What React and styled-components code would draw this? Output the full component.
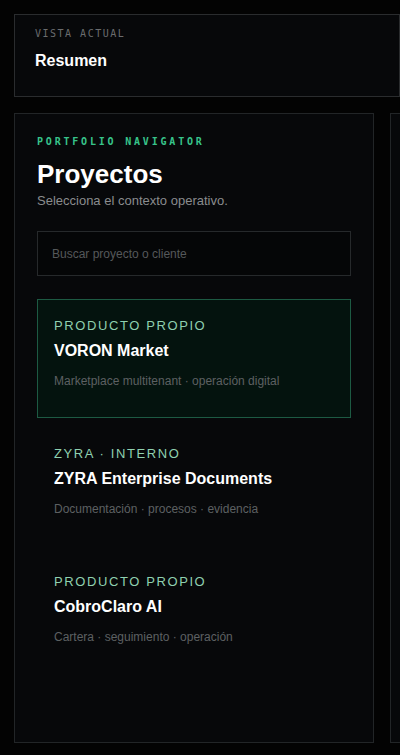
import React, { useState } from 'react'
import styled, { createGlobalStyle } from 'styled-components'

const projects = [
  { id: 'voron', tag: 'Producto propio', name: 'VORON Market', meta: 'Marketplace multitenant · operación digital' },
  { id: 'zyra', tag: 'ZYRA · Interno', name: 'ZYRA Enterprise Documents', meta: 'Documentación · procesos · evidencia' },
  { id: 'cobro', tag: 'Producto propio', name: 'CobroClaro AI', meta: 'Cartera · seguimiento · operación' },
]

const GlobalStyle = createGlobalStyle`
  html, body {
    margin: 0;
    padding: 0;
    background: #030303;
    overflow: hidden;
  }
  body {
    font-family: "Liberation Sans", Arial, sans-serif;
    color: #f5f5f5;
  }
  * { box-sizing: border-box; }
`

const App = () => {
  const [selected, setSelected] = useState('voron')
  const [query, setQuery] = useState('')

  return (
    <Page>
      <GlobalStyle />
      <ViewCard>
        <Eyebrow>Vista actual</Eyebrow>
        <ViewTitle>Resumen</ViewTitle>
      </ViewCard>

      <Columns>
        <Panel>
          <Kicker>Portfolio navigator</Kicker>
          <Heading>Proyectos</Heading>
          <Subtitle>Selecciona el contexto operativo.</Subtitle>
          <Search
            placeholder="Buscar proyecto o cliente"
            value={query}
            onChange={(e) => setQuery(e.target.value)}
          />
          <List>
            {projects.map((p) => (
              <Item key={p.id} $active={selected === p.id} onClick={() => setSelected(p.id)}>
                <Tag>{p.tag}</Tag>
                <Name>{p.name}</Name>
                <Meta>{p.meta}</Meta>
              </Item>
            ))}
          </List>
        </Panel>
        <Panel />
      </Columns>
    </Page>
  )
}

const Page = styled.div`
  padding: 14px 0 0 14px;
  display: flex;
  flex-direction: column;
  gap: 16px;
  width: 800px;
`

const ViewCard = styled.div`
  width: 386px;
  height: 83px;
  background: #07080a;
  border: 1px solid #2a2c2e;
  padding: 13px 20px;
`

const Eyebrow = styled.div`
  font-family: "DejaVu Sans Mono", "Liberation Mono", monospace;
  font-size: 10px;
  line-height: 12px;
  letter-spacing: 1.5px;
  text-transform: uppercase;
  color: #6a6c6e;
`

const ViewTitle = styled.div`
  margin-top: 11px;
  font-size: 16px;
  line-height: 20px;
  font-weight: 700;
  color: #ffffff;
`

const Columns = styled.div`
  display: flex;
  gap: 16px;
`

const Panel = styled.section`
  flex: 0 0 360px;
  height: 630px;
  background: #07080a;
  border: 1px solid #222527;
  padding: 22px;
  display: flex;
  flex-direction: column;
`

const Kicker = styled.div`
  font-family: "DejaVu Sans Mono", "Liberation Mono", monospace;
  font-size: 10px;
  line-height: 12px;
  font-weight: 700;
  letter-spacing: 2.8px;
  text-transform: uppercase;
  color: #37c48a;
`

const Heading = styled.h1`
  margin: 10px 0 0;
  font-size: 26px;
  line-height: 32px;
  font-weight: 700;
  color: #ffffff;
`

const Subtitle = styled.p`
  margin: 3px 0 0;
  font-size: 13px;
  line-height: 16px;
  color: #8a8c8e;
`

const Search = styled.input`
  margin-top: 22px;
  width: 100%;
  height: 45px;
  padding: 0 14px;
  background: #050607;
  border: 1px solid #26292b;
  border-radius: 0;
  font-family: "Liberation Sans", Arial, sans-serif;
  font-size: 12px;
  color: #dddddd;
  outline: none;

  &::placeholder {
    color: #55585a;
  }
`

const List = styled.div`
  margin-top: 23px;
  display: flex;
  flex-direction: column;
  gap: 9px;
`

const Item = styled.div`
  height: 119px;
  padding: 18px 16px 0;
  border: 1px solid ${(p) => (p.$active ? '#1d5a43' : 'transparent')};
  background: ${(p) => (p.$active ? '#04130e' : 'transparent')};
  cursor: pointer;
`

const Tag = styled.div`
  font-size: 13px;
  line-height: 16px;
  letter-spacing: 1.6px;
  text-transform: uppercase;
  color: #8fd0b0;
`

const Name = styled.div`
  margin-top: 7px;
  font-size: 16px;
  line-height: 20px;
  font-weight: 700;
  color: #ffffff;
`

const Meta = styled.div`
  margin-top: 13px;
  font-size: 12px;
  line-height: 15px;
  color: #5d6062;
`

export default App
